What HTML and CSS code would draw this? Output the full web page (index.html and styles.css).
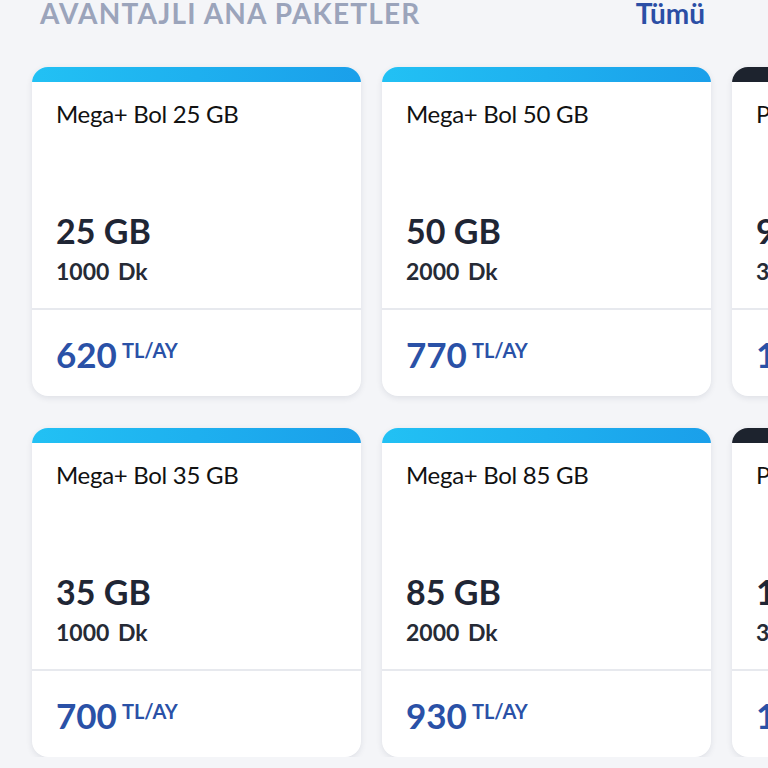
FILE: index.html
```html
<!DOCTYPE html>
<html>
<head>
<meta charset="utf-8">
<link rel="stylesheet" href="styles.css">
</head>
<body>
<div class="page">
  <div class="header">
    <div class="title">AVANTAJLI ANA PAKETLER</div>
    <div class="all">Tümü</div>
  </div>
  <div class="rows">
    <div class="row">
      <div class="card">
        <div class="band"></div>
        <div class="body">
          <div class="top">
            <div class="name">Mega+ Bol 25 GB</div>
            <div class="gb">25 GB</div>
            <div class="dk">1000 Dk</div>
          </div>
          <div class="bottom"><span class="price">620</span><span class="unit">TL/AY</span></div>
        </div>
      </div>
      <div class="card">
        <div class="band"></div>
        <div class="body">
          <div class="top">
            <div class="name">Mega+ Bol 50 GB</div>
            <div class="gb">50 GB</div>
            <div class="dk">2000 Dk</div>
          </div>
          <div class="bottom"><span class="price">770</span><span class="unit">TL/AY</span></div>
        </div>
      </div>
      <div class="card">
        <div class="band dark"></div>
        <div class="body">
          <div class="top">
            <div class="name">Platinum 90 GB</div>
            <div class="gb">90 GB</div>
            <div class="dk">3000 Dk</div>
          </div>
          <div class="bottom"><span class="price">1100</span><span class="unit">TL/AY</span></div>
        </div>
      </div>
    </div>
    <div class="row">
      <div class="card">
        <div class="band"></div>
        <div class="body">
          <div class="top">
            <div class="name">Mega+ Bol 35 GB</div>
            <div class="gb">35 GB</div>
            <div class="dk">1000 Dk</div>
          </div>
          <div class="bottom"><span class="price">700</span><span class="unit">TL/AY</span></div>
        </div>
      </div>
      <div class="card">
        <div class="band"></div>
        <div class="body">
          <div class="top">
            <div class="name">Mega+ Bol 85 GB</div>
            <div class="gb">85 GB</div>
            <div class="dk">2000 Dk</div>
          </div>
          <div class="bottom"><span class="price">930</span><span class="unit">TL/AY</span></div>
        </div>
      </div>
      <div class="card">
        <div class="band dark"></div>
        <div class="body">
          <div class="top">
            <div class="name">Platinum 150 GB</div>
            <div class="gb">150 GB</div>
            <div class="dk">3000 Dk</div>
          </div>
          <div class="bottom"><span class="price">1300</span><span class="unit">TL/AY</span></div>
        </div>
      </div>
    </div>
  </div>
</div>
</body>
</html>
```

FILE: styles.css
```css
html, body {
  margin: 0;
  padding: 0;
  background: #f4f5f8;
}
body {
  font-family: Lato, "Noto Sans", sans-serif;
  width: 768px;
  height: 768px;
  overflow: hidden;
}
.page {
  width: 768px;
  overflow: hidden;
}
.header {
  display: flex;
  justify-content: space-between;
  align-items: baseline;
  padding: 0 63px 0 40px;
  height: 31px;
  margin-top: -4px;
}
.title {
  font-size: 28px;
  font-weight: 700;
  letter-spacing: 1.2px;
  color: #9ba4bb;
  line-height: 35px;
}
.all {
  font-size: 28px;
  font-weight: 700;
  color: #2b4ea5;
  line-height: 35px;
}
.rows {
  display: flex;
  flex-direction: column;
  gap: 32px;
  padding-top: 40px;
}
.row {
  display: flex;
  gap: 21px;
  padding-left: 32px;
}
.card {
  flex: 0 0 329px;
  width: 329px;
  border-radius: 16px;
  box-shadow: 0 2px 6px rgba(30, 40, 70, 0.10);
  background: #fff;
  overflow: hidden;
}
.band {
  height: 15px;
  background: linear-gradient(90deg, #22c1f4 0%, #1a9fea 100%);
}
.band.dark {
  background: #1d232e;
}
.body {
  display: flex;
  flex-direction: column;
}
.top {
  height: 228px;
  padding: 18px 24px 0;
  box-sizing: border-box;
  border-bottom: 2px solid #e7e9ee;
  display: flex;
  flex-direction: column;
}
.name {
  font-size: 24px;
  line-height: 28px;
  letter-spacing: -0.3px;
  color: #111;
  white-space: nowrap;
}
.gb {
  margin-top: auto;
  font-size: 34px;
  font-weight: 700;
  line-height: 40px;
  color: #1f2635;
  white-space: nowrap;
}
.dk {
  font-size: 23px;
  font-weight: 700;
  line-height: 30px;
  word-spacing: 3px;
  color: #262b36;
  margin-top: 5px;
  margin-bottom: 22px;
  white-space: nowrap;
}
.bottom {
  height: 86px;
  padding: 24px 24px 0;
  box-sizing: border-box;
  display: flex;
  align-items: flex-start;
  white-space: nowrap;
}
.price {
  font-size: 35px;
  font-weight: 700;
  line-height: 40px;
  color: #2a51a7;
}
.unit {
  font-size: 20px;
  font-weight: 700;
  line-height: 24px;
  color: #2a51a7;
  margin-left: 5px;
  margin-top: 4px;
}
```
